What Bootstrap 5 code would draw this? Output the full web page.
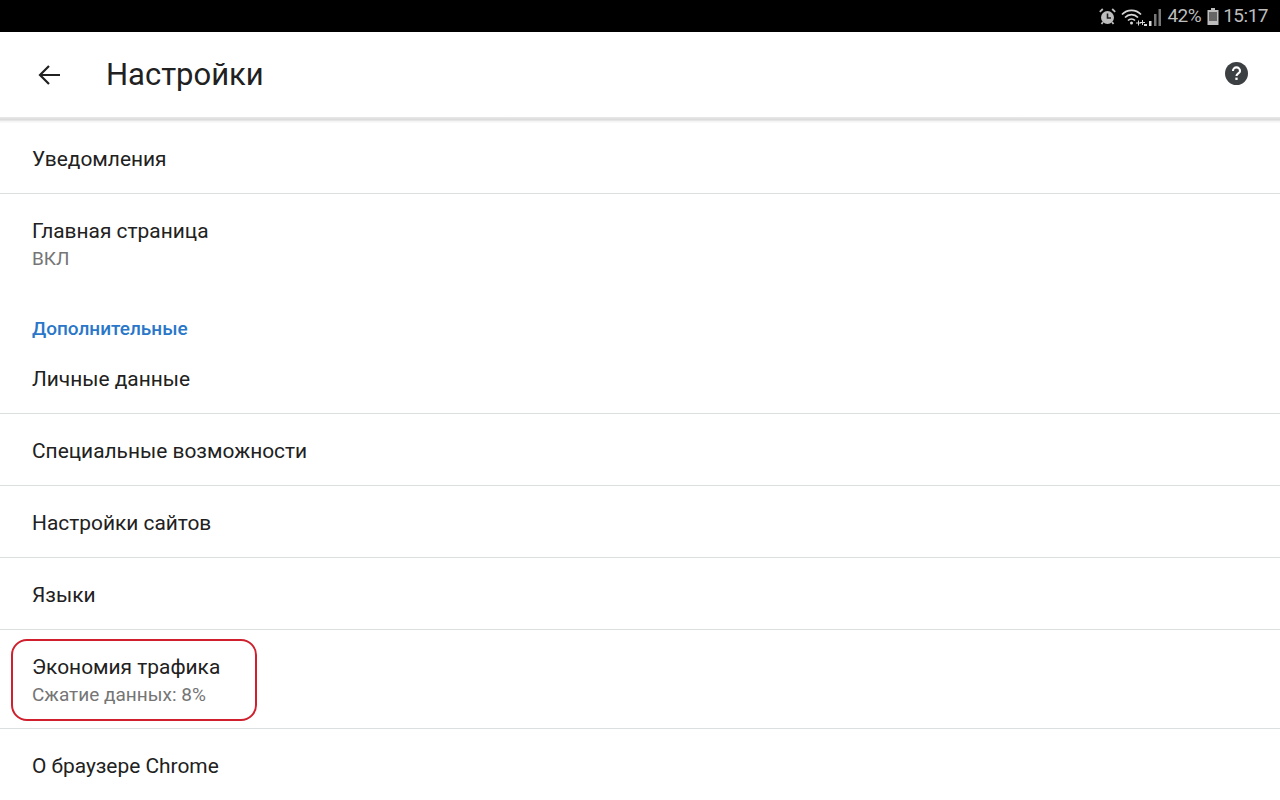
<!DOCTYPE html>
<html lang="ru">
<head>
    <meta charset="UTF-8">
    <meta name="viewport" content="width=device-width, initial-scale=1.0">
    <title>Настройки</title>
    <link href="https://cdn.jsdelivr.net/npm/bootstrap@5.3.0/dist/css/bootstrap.min.css" rel="stylesheet">
    <style>
        html, body { height: 800px; overflow: hidden; }
        body { font-family: Roboto, "Liberation Sans", sans-serif; background: #fff; color: #212121; }
        .status-line { height: 32px; background: #000; color: #bdbdbd; font-size: 19px; padding: 1px 12px 0 0; gap: 4px; letter-spacing: -.5px; }
        .status-line svg { display: block; }
        .gap-fix-1 { margin-left: 1px; }
        .gap-fix-2 { margin-left: 2px; }
        .app-head { height: 85px; padding-left: 37px; padding-right: 32px; }
        .app-title { font-size: 31px; font-weight: 400; line-height: 36px; margin: 1px 0 0 45px; color: #212121; }
        .help-icon { margin-bottom: 3px; margin-right: .5px; }
        .head-shade { height: 6px; background: linear-gradient(#e9e9e9 0, #d9d9d9 3px, #f3f3f3 4px, #fafafa 100%); }
        .set-row { padding-left: 32px; padding-top: 2px; border-bottom: 1px solid #dcdfe0; font-size: 20.9px; line-height: 28px; display: flex; flex-direction: column; justify-content: center; }
        .h-71 { height: 71px; }
        .h-72 { height: 72px; }
        .no-line { border-bottom: 0; }
        .two-line { padding-top: 23px; padding-bottom: 19px; }
        .sub-text { color: #757575; font-size: 19px; line-height: 28px; }
        .group-title { color: #2a77c9; font-size: 19px; font-weight: 500; line-height: 24px; padding-left: 32px; padding-top: 1px; margin-top: 24px; margin-bottom: 1px; }
        .mark-box { position: absolute; left: 11px; top: 9px; width: 246px; height: 82px; border: 2px solid #d0202e; border-radius: 16px; }
    </style>
</head>
<body>
    <div class="status-line d-flex align-items-center justify-content-end">
        <svg width="17" height="17" viewBox="0 0 17 17"><circle cx="8.500" cy="9.500" r="6.500" fill="#bdbdbd"/><path d="M8.500 5.500v4.500h3.500" stroke="#1c1c1c" stroke-width="1.600" fill="none"/><path d="M.8 3.800l3-2.800M16.200 3.800l-3-2.800M2.500 16l1.500-2M14.500 16l-1.500-2" stroke="#bdbdbd" stroke-width="1.800"/></svg>
        <svg width="41" height="18" viewBox="0 0 41 18" class="gap-fix-1"><path d="M1 6.500a13 13 0 0 1 19 0M4 9.500a9 9 0 0 1 13 0M7 12.500a5 5 0 0 1 7 0" stroke="#d8d8d8" stroke-width="1.700" fill="none"/><circle cx="10.500" cy="15" r="1.500" fill="#d8d8d8"/><path d="M15 15h5M17.500 12.500v5M19 14.500h5M21.500 12v5" stroke="#d8d8d8" stroke-width="1"/><path d="M23 18h3v-2h-3zM28 18h2.500v-5H28z" fill="#d8d8d8"/><path d="M33 18h2.500V6H33zM37.500 18H40V1h-2.500z" fill="#777"/></svg>
        <span class="gap-fix-1">42%</span>
        <svg width="12" height="17" viewBox="0 0 12 17" class="gap-fix-2"><path d="M4 0h4v2h3.500v15H.5V2H4z" fill="#bdbdbd"/><path d="M2 4h8v9H2z" fill="#666"/></svg>
        <span>15:17</span>
    </div>

    <div class="app-head d-flex align-items-center">
        <svg width="24" height="24" viewBox="0 0 24 24"><path d="M23 12H3M12 3l-9 9 9 9" stroke="#212121" stroke-width="2.200" fill="none"/></svg>
        <h1 class="app-title flex-grow-1">Настройки</h1>
        <svg width="23" height="23" viewBox="0 0 24 24" class="help-icon"><circle cx="12" cy="12" r="12" fill="#3c4043"/><path d="M8.300 9.300a3.700 3.700 0 0 1 7.400 0c0 2.500-3.700 2.700-3.700 5.200" stroke="#fff" stroke-width="2.200" fill="none"/><rect x="10.800" y="16.300" width="2.400" height="2.400" fill="#fff"/></svg>
    </div>
    <div class="head-shade"></div>

    <div class="set-row h-71">Уведомления</div>
    <div class="set-row no-line two-line">
        <div>Главная страница</div>
        <div class="sub-text">ВКЛ</div>
    </div>
    <div class="group-title">Дополнительные</div>
    <div class="set-row h-72">Личные данные</div>
    <div class="set-row h-72">Специальные возможности</div>
    <div class="set-row h-72">Настройки сайтов</div>
    <div class="set-row h-72">Языки</div>
    <div class="set-row position-relative two-line">
        <div>Экономия трафика</div>
        <div class="sub-text">Сжатие данных: 8%</div>
        <div class="mark-box"></div>
    </div>
    <div class="set-row no-line h-72">О браузере Chrome</div>

    <script src="https://cdn.jsdelivr.net/npm/bootstrap@5.3.0/dist/js/bootstrap.bundle.min.js"></script>
</body>
</html>
